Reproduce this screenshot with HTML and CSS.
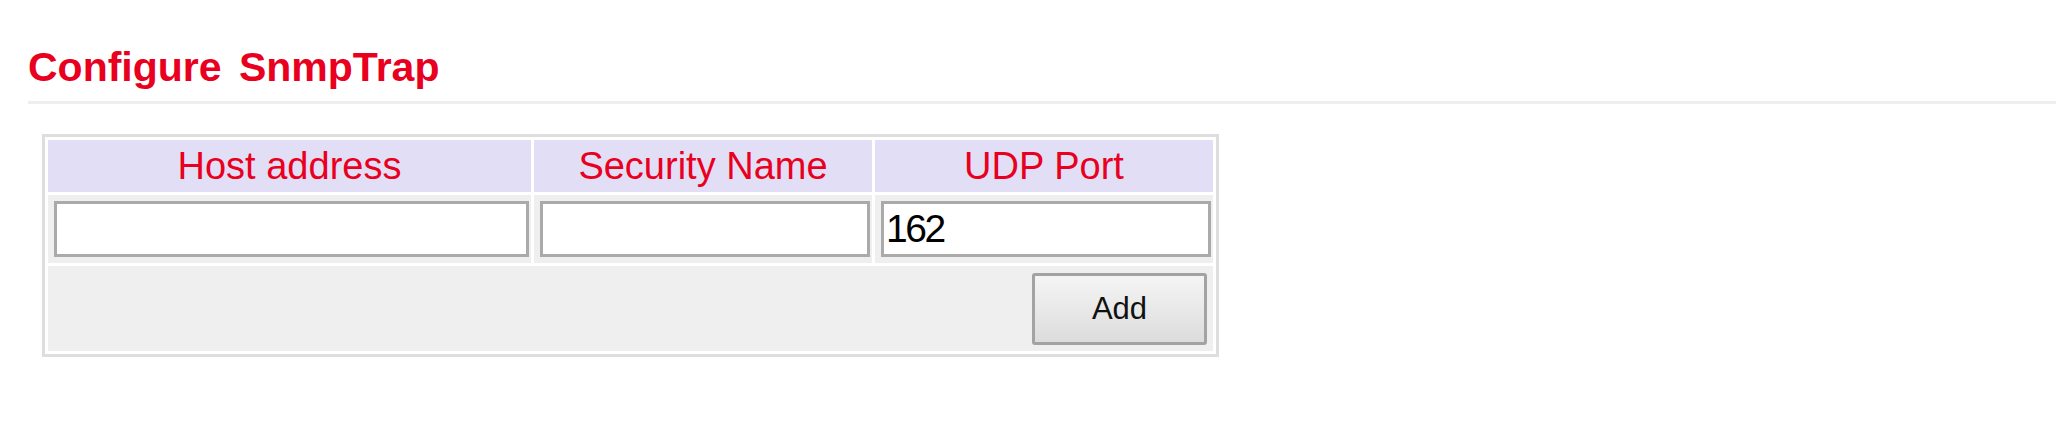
FILE: index.html
```html
<!DOCTYPE html>
<html lang="en">
<head>
<meta charset="utf-8">
<title>Configure SnmpTrap</title>
<link rel="stylesheet" href="styles.css">
</head>
<body>
  <h2 class="page-title">Configure SnmpTrap</h2>
  <div class="trap-table">
    <div class="th">Host address</div>
    <div class="th">Security Name</div>
    <div class="th">UDP Port</div>
    <div class="td"><input class="field" type="text" value=""></div>
    <div class="td"><input class="field" type="text" value=""></div>
    <div class="td"><input class="field" type="text" value="162"></div>
    <div class="td actions"><button class="btn" type="button">Add</button></div>
  </div>
</body>
</html>
```

FILE: styles.css
```css
html, body {
  margin: 0;
  padding: 0;
  background: #ffffff;
  font-family: "Liberation Sans", Arial, sans-serif;
}

.page-title {
  margin: 0 0 0 28px;
  padding: 44px 0 11px 0;
  font-size: 41px;
  line-height: 46px;
  font-weight: bold;
  color: #e8001e;
  word-spacing: 6px;
  border-bottom: 3px solid #eeeeee;
}

.trap-table {
  display: grid;
  grid-template-columns: 483px 338px 338px;
  grid-template-rows: 52px 68px 85px;
  gap: 3px;
  padding: 3px;
  border: 3px solid #dedede;
  width: max-content;
  margin: 30px 0 0 42px;
}

.th {
  background: #e2def5;
  color: #e8001e;
  font-size: 38px;
  line-height: 52px;
  text-align: center;
  white-space: nowrap;
}

.td {
  background: #efefef;
  padding: 6px 0 0 6px;
}

.field {
  box-sizing: border-box;
  display: block;
  width: calc(100% - 2px);
  height: 56px;
  margin: 0;
  padding: 0 2px;
  border: 3px solid #aaaaaa;
  border-radius: 0;
  background: #ffffff;
  font-family: "Liberation Sans", Arial, sans-serif;
  font-size: 39px;
  letter-spacing: -2.5px;
  color: #000000;
  outline: none;
}

.actions {
  grid-column: 1 / -1;
  display: flex;
  justify-content: flex-end;
  align-items: center;
  padding: 0 6px 0 0;
}

.btn {
  box-sizing: border-box;
  width: 175px;
  height: 72px;
  margin: 0;
  padding: 0;
  border: 3px solid #a3a3a3;
  border-radius: 3px;
  background: linear-gradient(#f5f5f5, #dcdcdc);
  font-family: "Liberation Sans", Arial, sans-serif;
  font-size: 31px;
  color: #111111;
}
```
